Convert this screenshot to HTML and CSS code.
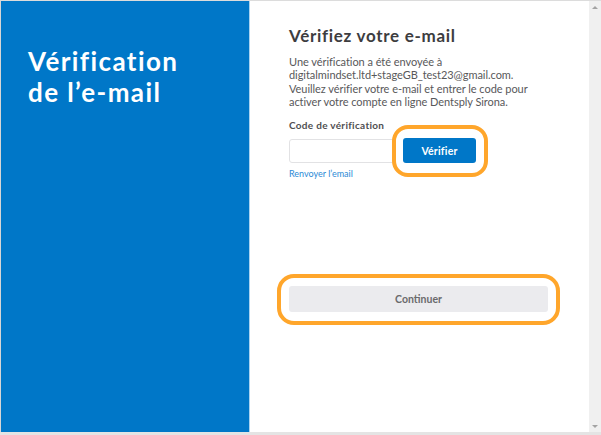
FILE: index.html
```html
<!DOCTYPE html>
<html lang="fr">
<head>
<meta charset="utf-8">
<title>Vérification de l'e-mail</title>
<link rel="stylesheet" href="styles.css">
</head>
<body>
<div class="window">
  <aside class="brand">
    <h1 class="brand-title">Vérification<br>de l’e-mail</h1>
  </aside>
  <main class="content">
    <h2 class="title">Vérifiez votre e-mail</h2>
    <p class="intro">Une vérification a été envoyée à<br>digitalmindset.ltd+stageGB_test23@gmail.com.<br>Veuillez vérifier votre e-mail et entrer le code pour<br>activer votre compte en ligne Dentsply Sirona.</p>
    <label class="field-label" for="code">Code de vérification</label>
    <div class="code-row">
      <input class="code-input" id="code" type="text">
      <span class="ring ring-verify"><button class="btn btn-primary" type="button">Vérifier</button></span>
    </div>
    <a class="resend" href="#">Renvoyer l’email</a>
    <div class="continue-wrap">
      <span class="ring ring-continue"><button class="btn btn-continue" type="button">Continuer</button></span>
    </div>
  </main>
  <div class="scrollbar">
    <span class="arrow arrow-up"></span>
    <span class="arrow arrow-down"></span>
  </div>
</div>
</body>
</html>
```

FILE: styles.css
```css
* { box-sizing: border-box; }
html, body { margin: 0; padding: 0; }
body {
  width: 601px;
  height: 435px;
  overflow: hidden;
  background: #e4e4e4;
  font-family: Lato, "Open Sans", sans-serif;
}
.window {
  display: flex;
  height: 432px;
  border-top: 1px solid #dcdcdc;
  border-left: 1px solid #d6d6d6;
  background: #fff;
}
.brand {
  width: 249px;
  flex: none;
  background: #0077c8;
  border-right: 1px solid #a9d3f0;
  padding: 45px 0 0 27px;
}
.brand-title {
  margin: 0;
  color: #fff;
  font-size: 26px;
  line-height: 31px;
  font-weight: 700;
  letter-spacing: 1.4px;
}
.content {
  flex: 1;
  padding: 25px 0 0 39px;
  color: #555;
}
.title {
  margin: 0;
  font-size: 17px;
  line-height: 20px;
  font-weight: 700;
  color: #3d3d3f;
  letter-spacing: 0.7px;
}
.intro {
  margin: 9px 0 0;
  font-size: 11px;
  line-height: 13.3px;
  color: #58585a;
  letter-spacing: -0.05px;
}
.field-label {
  display: block;
  margin-top: 11px;
  font-size: 10px;
  line-height: 13px;
  font-weight: 700;
  color: #4f4f51;
  letter-spacing: 0.3px;
}
.code-row {
  display: flex;
  align-items: center;
  margin-top: 6px;
  gap: 2px;
}
.code-input {
  width: 112px;
  height: 24px;
  border: 1px solid #e2e2e4;
  border-radius: 3px;
  background: #fff;
  padding: 0 6px;
}
.ring {
  position: relative;
  display: inline-block;
}
.ring::before {
  content: "";
  position: absolute;
  border: 4px solid #ffa62b;
  background: #fff;
  border-radius: 16px;
}
.ring-verify::before { inset: -13px -12px -14px -11px; }
.ring-continue::before { inset: -12px -12px -13px -12px; border-radius: 17px; }
.btn {
  position: relative;
  z-index: 1;
  border: 0;
  border-radius: 3px;
  font-family: inherit;
  font-weight: 700;
  font-size: 10px;
  cursor: pointer;
}
.btn-primary {
  width: 73px;
  height: 25px;
  background: #0077c8;
  color: #fff;
  font-size: 10.5px;
  letter-spacing: 0.2px;
}
.resend {
  display: block;
  margin-top: 5px;
  font-size: 9px;
  line-height: 12px;
  color: #2b8ad6;
  text-decoration: none;
}
.continue-wrap {
  margin-top: 106px;
}
.btn-continue {
  width: 259px;
  height: 26px;
  background: #ebebee;
  color: #6a6a6c;
  font-size: 10.5px;
}
.scrollbar {
  width: 12px;
  flex: none;
  background: #f0f0f0;
  display: flex;
  flex-direction: column;
  justify-content: space-between;
  align-items: center;
  padding: 5px 0 4px;
}
.arrow {
  width: 0;
  height: 0;
  border-left: 3px solid transparent;
  border-right: 3px solid transparent;
}
.arrow-up { border-bottom: 3px solid #a3a3a3; }
.arrow-down { border-top: 3px solid #a3a3a3; }
```
